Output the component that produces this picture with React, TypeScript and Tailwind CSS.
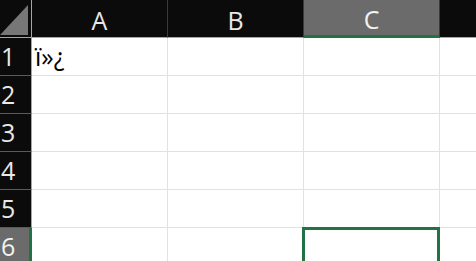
import React from 'react'

const cols = ['A', 'B', 'C']
const rows = [1, 2, 3, 4, 5, 6]

const HeaderCell = ({ label, active }: { label: string; active?: boolean }) => (
  <div
    className={
      'w-[136px] shrink-0 h-[38px] flex items-center justify-center border-r border-r-[#3a3a3a] ' +
      (active
        ? 'bg-[#6b6b6b] border-b-[3px] border-b-[#217346] text-[#f2f2f2]'
        : 'bg-[#0b0b0b] border-b border-b-[#a6a6a6] text-[#e8e8e8]')
    }
  >
    <span className="leading-none pt-[4px]">{label}</span>
  </div>
)

const RowHead = ({ n, active }: { n: number; active?: boolean }) => (
  <div
    className={
      'w-[32px] shrink-0 h-[38px] flex items-center pl-[1px] border-b ' +
      (active
        ? 'bg-[#6b6b6b] border-b-[#6b6b6b] border-r-[3px] border-r-[#217346] text-[#f2f2f2]'
        : 'bg-[#0b0b0b] border-b-[#5a5a5a] border-r border-r-[#a6a6a6] text-[#e8e8e8]')
    }
  >
    <span className="leading-none">{n}</span>
  </div>
)

export default function App() {
  return (
    <div className="w-[476px] h-[261px] overflow-hidden bg-white font-['Open_Sans','Noto_Sans',sans-serif] text-[25px]">
      {/* column header */}
      <div className="flex">
        <div className="w-[32px] shrink-0 h-[38px] bg-[#0b0b0b] border-r border-r-[#a6a6a6] border-b border-b-[#a6a6a6] relative">
          <svg className="absolute left-0 top-0" width="31" height="37" viewBox="0 0 31 37">
            <polygon points="0,35 28,5 28,35" fill="#777777" />
          </svg>
        </div>
        {cols.map((c) => (
          <HeaderCell key={c} label={c} active={c === 'C'} />
        ))}
        <div className="flex-1 h-[38px] bg-[#0b0b0b] border-b border-b-[#a6a6a6]" />
      </div>

      {rows.map((n) => (
        <div key={n} className="flex">
          <RowHead n={n} active={n === 6} />
          {cols.map((c) => (
            <div
              key={c}
              className="relative w-[136px] shrink-0 h-[38px] border-r border-b border-[#e1e1e1] flex items-center pl-[3px] text-black"
            >
              {n === 1 && c === 'A' && <span className="leading-none">ï»¿</span>}
              {n === 6 && c === 'C' && (
                <div className="absolute -left-[2px] -top-[1px] w-[138px] h-[40px] border-[3px] border-[#217346]" />
              )}
            </div>
          ))}
          <div className="flex-1 h-[38px] border-b border-[#e1e1e1]" />
        </div>
      ))}
    </div>
  )
}
